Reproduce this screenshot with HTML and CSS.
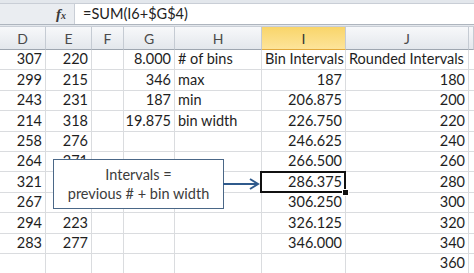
FILE: index.html
```html
<!doctype html>
<html lang="en">
  <head>
    <meta charset="utf-8">
    <title>Bin Intervals</title>
    <link rel="stylesheet" href="styles.css">
  </head>
  <body>
    <div class="formula-bar">
      <div class="fx-area"><span class="fx">f<span class="fx-sub">x</span></span></div>
      <div class="formula">=SUM(I6+$G$4)</div>
    </div>
    <div class="sheet">
      <div class="hd">D</div><div class="hd">E</div><div class="hd">F</div><div class="hd">G</div>
      <div class="hd">H</div><div class="hd active">I</div><div class="hd">J</div><div class="hd"></div>

      <div class="c">307</div><div class="c">220</div><div class="c"></div><div class="c">8.000</div>
      <div class="c txt"># of bins</div><div class="c txt">Bin Intervals</div><div class="c txt">Rounded Intervals</div><div class="c"></div>

      <div class="c">299</div><div class="c">215</div><div class="c"></div><div class="c">346</div>
      <div class="c txt">max</div><div class="c">187</div><div class="c">180</div><div class="c"></div>

      <div class="c">243</div><div class="c">231</div><div class="c"></div><div class="c">187</div>
      <div class="c txt">min</div><div class="c">206.875</div><div class="c">200</div><div class="c"></div>

      <div class="c">214</div><div class="c">318</div><div class="c"></div><div class="c">19.875</div>
      <div class="c txt">bin width</div><div class="c">226.750</div><div class="c">220</div><div class="c"></div>

      <div class="c">258</div><div class="c">276</div><div class="c"></div><div class="c"></div>
      <div class="c"></div><div class="c">246.625</div><div class="c">240</div><div class="c"></div>

      <div class="c">264</div><div class="c">271</div><div class="c"></div><div class="c"></div>
      <div class="c"></div><div class="c">266.500</div><div class="c">260</div><div class="c"></div>

      <div class="c">321</div><div class="c"></div><div class="c"></div><div class="c"></div>
      <div class="c"></div><div class="c sel">286.375</div><div class="c">280</div><div class="c"></div>

      <div class="c">267</div><div class="c"></div><div class="c"></div><div class="c"></div>
      <div class="c"></div><div class="c">306.250</div><div class="c">300</div><div class="c"></div>

      <div class="c">294</div><div class="c">223</div><div class="c"></div><div class="c"></div>
      <div class="c"></div><div class="c">326.125</div><div class="c">320</div><div class="c"></div>

      <div class="c">283</div><div class="c">277</div><div class="c"></div><div class="c"></div>
      <div class="c"></div><div class="c">346.000</div><div class="c">340</div><div class="c"></div>

      <div class="c"></div><div class="c"></div><div class="c"></div><div class="c"></div>
      <div class="c"></div><div class="c"></div><div class="c">360</div><div class="c"></div>

      <div class="callout">Intervals =<br>previous # + bin width</div>
      <svg class="arrow" width="38" height="14" viewBox="0 0 38 14">
        <line x1="0" y1="7" x2="35" y2="7" />
        <polyline points="27,2 35,7 27,12" />
      </svg>
    </div>
  </body>
</html>
```

FILE: styles.css
```css
body {
  margin: 0;
  width: 474px;
  height: 273px;
  overflow: hidden;
  background: #e3e7ec;
  font-family: Lato, "Liberation Sans", sans-serif;
  color: #1e1e1e;
}

.formula-bar {
  display: flex;
  height: 20px;
  margin-top: 3px;
  border-top: 1px solid #c9ced6;
  border-bottom: 1px solid #aeb5be;
}

.fx-area {
  width: 75px;
  display: flex;
  justify-content: flex-end;
  align-items: center;
  padding-right: 8px;
  box-sizing: border-box;
  background: #eaedf1;
  border-right: 1px solid #c9ced6;
}

.fx {
  font-family: "Liberation Serif", serif;
  font-style: italic;
  font-weight: bold;
  font-size: 15px;
  color: #3a3a3a;
}

.fx-sub {
  font-size: 10px;
}

.formula {
  flex: 1;
  background: #fff;
  padding-left: 8px;
  font-size: 14.5px;
  line-height: 20px;
  color: #222;
}

.sheet {
  position: relative;
  margin-top: 1px;
  display: grid;
  grid-template-columns: 46px 46px 32px 51px 87px 84px 123px 5px;
  grid-template-rows: 23px repeat(11, 20.4px);
  background: #fff;
  border-top: 1px solid #c9ced6;
}

.hd {
  box-sizing: border-box;
  display: flex;
  align-items: center;
  justify-content: center;
  font-size: 14px;
  color: #4a4a4a;
  background: linear-gradient(#f7f8fa, #e3e7ec);
  border-right: 1px solid #c5cbd3;
  border-bottom: 1px solid #9ea6b0;
}

.hd.active {
  background: linear-gradient(#f9d56a, #fde49a);
  border-bottom-color: #e2a93c;
  color: #333;
}

.c {
  box-sizing: border-box;
  display: flex;
  align-items: flex-end;
  justify-content: flex-end;
  padding: 0 3px 2px;
  font-size: 14.5px;
  line-height: 17px;
  white-space: nowrap;
  border-right: 1px solid #dadcdf;
  border-bottom: 1px solid #dadcdf;
}

.c.txt {
  justify-content: flex-start;
}

.sel {
  position: relative;
}

.sel::after {
  content: "";
  position: absolute;
  left: -2px;
  top: -1px;
  right: -1px;
  bottom: -1px;
  border: 2px solid #111;
}

.sel::before {
  content: "";
  position: absolute;
  right: -4px;
  bottom: -4px;
  width: 5px;
  height: 5px;
  background: #111;
  border: 1px solid #fff;
  z-index: 1;
}

.callout {
  position: absolute;
  left: 53px;
  top: 132px;
  width: 171px;
  height: 50px;
  box-sizing: border-box;
  border: 1px solid #4a6787;
  background: #fff;
  text-align: center;
  font-size: 14.5px;
  line-height: 19px;
  padding-top: 5px;
  color: #3c3c3c;
}

.arrow {
  position: absolute;
  left: 223px;
  top: 150px;
}

.arrow line,
.arrow polyline {
  stroke: #2f5a8c;
  stroke-width: 2px;
  fill: none;
}
```
